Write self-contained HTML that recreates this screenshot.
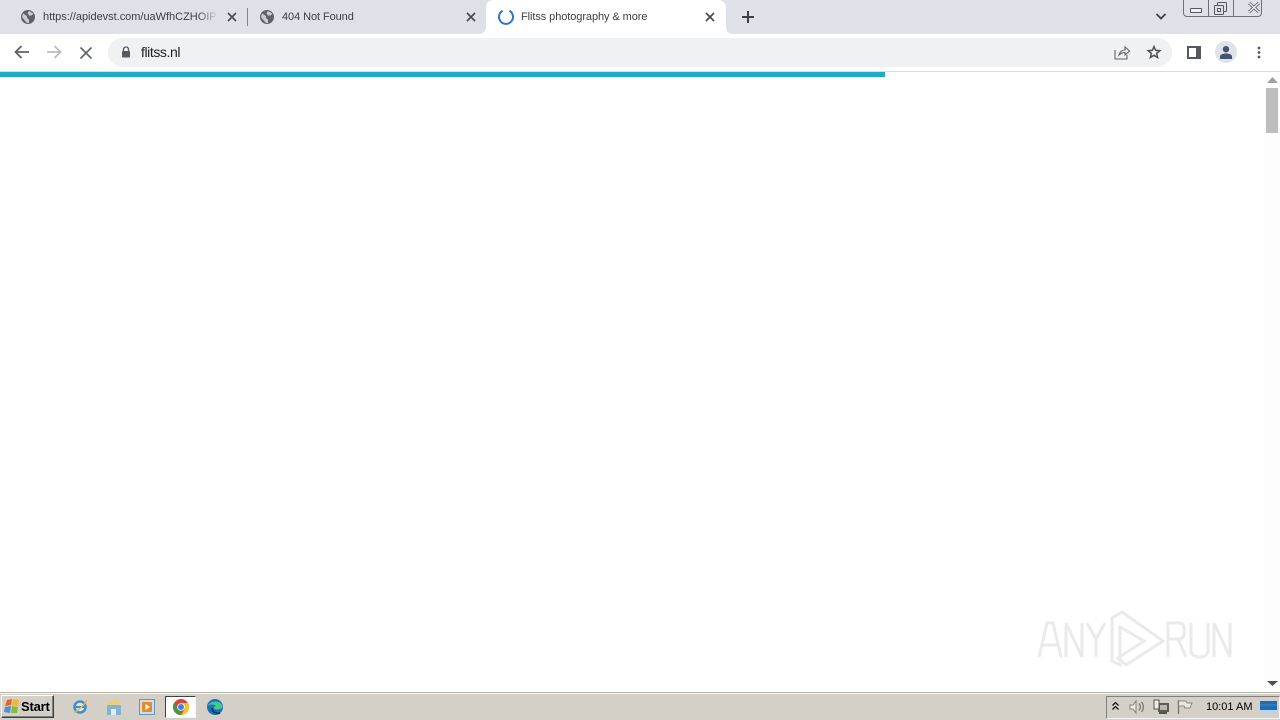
<!DOCTYPE html>
<html><head><meta charset="utf-8"><title>Flitss photography &amp; more</title>
<style>
*{box-sizing:border-box}
html,body{margin:0;padding:0;width:1280px;height:720px;overflow:hidden;background:#fff;font-family:"Liberation Sans",sans-serif}
.a{position:absolute}
.t{position:absolute;font-size:11px;line-height:14px;white-space:nowrap;color:#3c4043}
svg{position:absolute;overflow:visible}
</style></head><body>
<div class="a" style="left:0;top:0;width:1280px;height:34px;background:#dee1e7"></div>
<div class="a" style="left:0;top:34px;width:1280px;height:37px;background:#fff"></div>
<div class="a" style="left:0;top:71px;width:1280px;height:1px;background:#dcdcdc"></div>
<!-- active tab -->
<svg style="left:478px;top:0" width="256" height="38"><path d="M0 34C6 34 8 31 8 26V8C8 3 11 0 16 0H240C245 0 248 3 248 8V26C248 31 250 34 256 34V38H0Z" fill="#fff"/></svg>
<!-- globes -->
<svg style="left:21px;top:10px" width="14" height="14" viewBox="0 0 14 14"><circle cx="7" cy="7" r="7" fill="#5f6368"/><path d="M2 3.5L6 6V8L8 9.5V13L6 13L2.5 9L1 7ZM8 1L12.5 3.5L10.5 5.5H8L6.5 3Z" fill="#c9ccd2"/></svg>
<svg style="left:260px;top:10px" width="14" height="14" viewBox="0 0 14 14"><circle cx="7" cy="7" r="7" fill="#5f6368"/><path d="M2 3.5L6 6V8L8 9.5V13L6 13L2.5 9L1 7ZM8 1L12.5 3.5L10.5 5.5H8L6.5 3Z" fill="#c9ccd2"/></svg>
<div class="t" style="left:43px;top:10px;width:175px;overflow:hidden;letter-spacing:-.02px">https://apidevst.com/uaWfhCZHOIP</div>
<div class="a" style="left:198px;top:8px;width:20px;height:18px;background:linear-gradient(90deg,rgba(222,225,231,0),#dee1e7)"></div>
<div class="t" style="left:282px;top:10px;letter-spacing:-.08px">404 Not Found</div>
<div class="t" style="left:521px;top:10px;letter-spacing:-.08px">Flitss photography &amp; more</div>
<div class="a" style="left:247px;top:8px;width:1px;height:18px;background:#80868b"></div>
<!-- close icons -->
<svg style="left:228px;top:13px" width="8" height="8"><path d="M0 0L8 8M8 0L0 8" stroke="#45484d" stroke-width="1.6"/></svg>
<svg style="left:467px;top:13px" width="8" height="8"><path d="M0 0L8 8M8 0L0 8" stroke="#45484d" stroke-width="1.6"/></svg>
<svg style="left:706px;top:13px" width="8" height="8"><path d="M0 0L8 8M8 0L0 8" stroke="#45484d" stroke-width="1.6"/></svg>
<!-- spinner -->
<svg style="left:498px;top:9px" width="16" height="16" viewBox="0 0 16 16"><path d="M4.6 1.8A7 7 0 1 0 11.4 1.8" fill="none" stroke="#2f74c9" stroke-width="2"/></svg>
<!-- plus -->
<svg style="left:742px;top:11px" width="12" height="12"><path d="M6 0V12M0 6H12" stroke="#3c4043" stroke-width="2"/></svg>
<!-- chevron -->
<svg style="left:1156px;top:13px" width="10" height="7"><path d="M0.5 1L5 5.5L9.5 1" fill="none" stroke="#3c4043" stroke-width="1.8"/></svg>
<!-- window controls -->
<div class="a" style="left:1183px;top:-2px;width:79px;height:19px;border:1px solid #6d7078;border-radius:0 0 4px 4px"></div>
<div class="a" style="left:1208px;top:0;width:1px;height:16px;background:#6d7078"></div>
<div class="a" style="left:1233px;top:0;width:1px;height:16px;background:#6d7078"></div>
<div class="a" style="left:1190px;top:8px;width:12px;height:5px;border:1px solid #55585e;border-radius:1px;background:#eef0f3"></div>
<svg style="left:1214px;top:2px" width="13" height="13"><rect x="3.500" y=".5" width="9" height="9" rx="1" fill="none" stroke="#55585e"/><rect x=".5" y="3.500" width="9" height="9" rx="1" fill="#dee1e7" stroke="#55585e"/><rect x="3.500" y="6.500" width="3" height="3" fill="none" stroke="#55585e"/></svg>
<svg style="left:1248px;top:2px" width="12" height="11"><path d="M1 1L11 10M11 1L1 10" stroke="#5a5d63" stroke-width="3"/><path d="M1 1L11 10M11 1L1 10" stroke="#f2f3f5" stroke-width="1.400"/></svg>
<!-- nav -->
<svg style="left:14px;top:45px" width="16" height="14"><path d="M15 7H2M7.500 1L1.500 7L7.500 13" fill="none" stroke="#5f6368" stroke-width="1.800"/></svg>
<svg style="left:46px;top:45px" width="16" height="14"><path d="M1 7H14M8.500 1L14.500 7L8.500 13" fill="none" stroke="#b9bbbe" stroke-width="1.800"/></svg>
<svg style="left:80px;top:47px" width="12" height="12"><path d="M.5 .5L11.500 11.500M11.500 .5L.5 11.500" stroke="#5f6368" stroke-width="1.600"/></svg>
<!-- omnibox -->
<div class="a" style="left:108px;top:38px;width:1064px;height:29px;border-radius:15px;background:#eff1f3"></div>
<svg style="left:121px;top:46px" width="10" height="12"><path d="M2.500 5V3.500A2.500 2.500 0 0 1 7.500 3.500V5" fill="none" stroke="#55585e" stroke-width="1.300"/><rect x="1" y="5" width="8" height="6.500" rx="1" fill="#55585e"/></svg>
<div class="t" style="left:141px;top:44px;font-size:14px;line-height:17px;color:#202124;letter-spacing:-.42px">flitss.nl</div>
<svg style="left:1114px;top:45px" width="16" height="15" viewBox="0 0 16 15"><path d="M1 5V14H13V10M5 10C6 6.500 8.500 5 11 5V2L15.500 6L11 10V7.500C8.500 7.500 6.500 8.500 5 10Z" fill="none" stroke="#5f6368" stroke-width="1.100"/></svg>
<svg style="left:1147px;top:45px" width="14" height="14" viewBox="0 0 14 14"><path d="M7 1.500L8.600 5.300L12.800 5.700L9.600 8.400L10.600 12.500L7 10.300L3.400 12.500L4.400 8.400L1.200 5.700L5.400 5.300Z" fill="none" stroke="#4f5257" stroke-width="1.500"/></svg>
<svg style="left:1187px;top:46px" width="14" height="13"><rect width="14" height="13" fill="#55585e"/><rect x="2" y="2" width="7" height="9" fill="#fff"/></svg>
<div class="a" style="left:1215px;top:41px;width:22px;height:22px;border-radius:50%;background:#dfe2e9"></div>
<svg style="left:1219px;top:46px" width="14" height="13"><circle cx="7" cy="3.200" r="3.200" fill="#44516f"/><path d="M1 13V10.500C1 8.500 4 7.500 7 7.500S13 8.500 13 10.500V13Z" fill="#44516f"/></svg>
<svg style="left:1257px;top:46px" width="4" height="13"><circle cx="2" cy="2" r="1.400" fill="#55585e"/><circle cx="2" cy="6.500" r="1.400" fill="#55585e"/><circle cx="2" cy="11" r="1.400" fill="#55585e"/></svg>
<!-- progress -->
<div class="a" style="left:0;top:72px;width:885px;height:5px;background:#1eacc4"></div>
<!-- scrollbar -->
<div class="a" style="left:1264px;top:77px;width:16px;height:615px;background:#fdfdfd"></div>
<svg style="left:1267px;top:77px" width="11" height="6"><path d="M5.500 0L11 6H0Z" fill="#a0a0a0"/></svg>
<div class="a" style="left:1266px;top:88px;width:12px;height:45px;background:#bdbdbd"></div>
<svg style="left:1267px;top:681px" width="11" height="5"><path d="M0 0H11L5.500 5Z" fill="#505050"/></svg>
<!-- watermark -->
<svg style="left:1030px;top:605px" width="210" height="70" viewBox="0 0 210 70"><g fill="none" stroke="#eaeaea" stroke-width="3"><path d="M9 52L17 18H23L31 52M13 40H27M36 52V18L52 52V18M57 18L66 34L75 18M66 34V52"/><path d="M82 13V56L90 60V22L114 36L88 53L96 60L133 36L92 7Z"/><path d="M138 52V18H150C156 18 156 34 150 34H138M148 34L156 52M161 18V46C161 54 178 54 178 46V18M184 52V18L200 52V18"/></g></svg>
<!-- taskbar -->
<div class="a" style="left:0;top:692px;width:1280px;height:28px;background:#d4d0c8;border-top:1px solid #b9b6ae;box-shadow:inset 0 1px 0 #f5f3ee"></div>
<div class="a" style="left:1px;top:695px;width:53px;height:23px;background:#d4d0c8;border:1px solid;border-color:#fff #404040 #404040 #fff;box-shadow:inset -1px -1px 0 #808080"></div>
<svg style="left:4px;top:698px" width="16" height="16" viewBox="0 0 16 16"><path d="M3 2L8 1L7 7L1 8Z" fill="#e8622a"/><path d="M9 1L15 2L14 8L8 7Z" fill="#f2b632"/><path d="M1 9L7 8L6 15L0 14Z" fill="#4f8fd6"/><path d="M8 8L14 9L13 15L7 15Z" fill="#8ab83c"/></svg>
<div class="t" style="left:21px;top:699px;font-size:13px;font-weight:bold;color:#000;line-height:15px;letter-spacing:-.2px">Start</div>
<svg style="left:72px;top:698px" width="16" height="17" viewBox="0 0 16 17"><circle cx="8" cy="9" r="5.500" fill="#dcecf6" stroke="#3d8fd2" stroke-width="2.500"/><path d="M3 9H13" stroke="#3d8fd2" stroke-width="2"/><path d="M2 14.500C6 13 13 6 15 2" fill="none" stroke="#e4b84c" stroke-width="1.500"/></svg>
<svg style="left:106px;top:698px" width="15" height="17"><path d="M2 4H6L7 1H13V7H2Z" fill="#e8cf7e"/><rect x="1" y="7" width="14" height="10" fill="#7fb4d6"/><rect x="5" y="11" width="5" height="6" fill="#e2ecf2"/></svg>
<svg style="left:139px;top:699px" width="16" height="16"><rect x=".5" y=".5" width="15" height="15" fill="#cfdcec" stroke="#6b92bd"/><rect x="3" y="3" width="10" height="10" rx="1" fill="#e98a24"/><path d="M6.500 5L11 8L6.500 11Z" fill="#fff"/></svg>
<div class="a" style="left:165px;top:696px;width:31px;height:22px;background:#fff;border:1px solid;border-color:#404040 #f5f5f5 #f5f5f5 #404040"></div>
<svg style="left:173px;top:699px" width="16" height="16" viewBox="0 0 16 16"><circle cx="8" cy="8" r="8" fill="#d9453a"/><path d="M8 16A8 8 0 0 1 1 4L5 10.500L10 16Z" fill="#3a9b4b"/><path d="M8 4H15A8 8 0 0 1 8 16L11.500 10Z" fill="#f1c232"/><circle cx="8" cy="8" r="3.800" fill="#fff"/><circle cx="8" cy="8" r="3" fill="#3f7fe0"/></svg>
<svg style="left:207px;top:699px" width="16" height="16" viewBox="0 0 16 16"><circle cx="8" cy="8" r="8" fill="#1c6fb8"/><path d="M1 7C2 2 13 0 15.500 7C16 10 11 11 8 10C6 9 7 7 9 7C7 5 3 5 1 7Z" fill="#45c98f"/><path d="M5 9C5 13 9 15 13 14" fill="none" stroke="#0c3e77" stroke-width="2"/></svg>
<!-- tray -->
<div class="a" style="left:1106px;top:696px;width:174px;height:23px;border:1px solid;border-color:#808080 #f5f5f5 #f5f5f5 #808080"></div>
<svg style="left:1112px;top:701px" width="7" height="10"><path d="M.5 4.500L3.500 1.500L6.500 4.500M.5 8.500L3.500 5.500L6.500 8.500" fill="none" stroke="#111" stroke-width="1.300"/></svg>
<svg style="left:1129px;top:700px" width="16" height="14"><path d="M1 5H4L7 1V13L4 9H1Z" fill="#eeece6" stroke="#85837d"/><path d="M10 3.500C12 6 12 8 10 10.500M12.500 2C15 5 15 9 12.500 12" fill="none" stroke="#75736d" stroke-width="1.200"/></svg>
<svg style="left:1153px;top:699px" width="16" height="15"><rect x="5" y="4" width="11" height="9" fill="#5e5c57"/><rect x="7" y="6" width="7" height="5" fill="#b9b7b0"/><rect x="1" y="1" width="5" height="9" fill="#eeece6" stroke="#55534f"/><rect x="6" y="13" width="8" height="2" fill="#55534f"/></svg>
<svg style="left:1177px;top:700px" width="16" height="14"><path d="M1.500 0V14" stroke="#77756f" stroke-width="1.300"/><path d="M2 1H9L10 3H15L13 8H8L7 6H2" fill="#e9e7e1" stroke="#8a8882"/></svg>
<div class="t" style="left:1206px;top:700px;font-size:11px;color:#000">10:01 AM</div>
<svg style="left:1260px;top:701px" width="17" height="13"><rect width="17" height="13" fill="#1e6db4"/><rect y="9" width="17" height="4" fill="#bcd4ea"/><path d="M0 4H17" stroke="#3f88c8"/></svg>
</body></html>
